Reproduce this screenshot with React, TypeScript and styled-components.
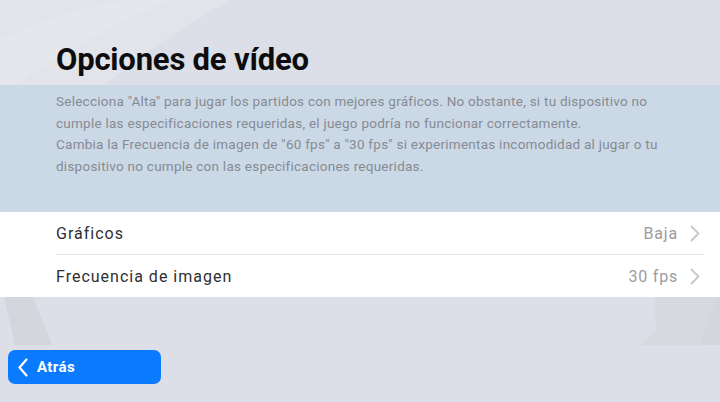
import styled, { createGlobalStyle } from 'styled-components';

const GlobalStyle = createGlobalStyle`
  html, body {
    margin: 0;
    padding: 0;
    background: #dcdfe7;
  }
  #root {
    width: 720px;
    height: 402px;
    overflow: hidden;
  }
`;

const Screen = styled.div`
  position: relative;
  width: 720px;
  height: 402px;
  display: flex;
  flex-direction: column;
  background: #dcdfe7;
  font-family: Roboto, 'Liberation Sans', sans-serif;
  overflow: hidden;
`;

// background art, sits under everything
const Backdrop = styled.svg`
  position: absolute;
  left: 0;
  top: 0;
  z-index: 0;
`;

const Header = styled.header`
  position: relative;
  z-index: 1;
  height: 85px;
  box-sizing: border-box;
  padding: 41px 0 0 56px;
`;

const Title = styled.h1`
  margin: 0;
  font-size: 31px;
  line-height: 38px;
  font-weight: 700;
  letter-spacing: -0.2px;
  color: #0d0d0f;
`;

const InfoBand = styled.section`
  position: relative;
  z-index: 1;
  height: 127px;
  box-sizing: border-box;
  padding: 6px 0 0 56px;
  background: #cbd8e6;
`;

const InfoText = styled.p`
  margin: 0;
  font-size: 13.5px;
  line-height: 21.5px;
  letter-spacing: 0.25px;
  color: #868b93;
  white-space: nowrap;
`;

const List = styled.ul`
  position: relative;
  z-index: 1;
  margin: 0;
  padding: 0 16px 0 56px;
  list-style: none;
  background: #ffffff;
`;

const Row = styled.li<{ $last?: boolean }>`
  display: flex;
  align-items: center;
  height: 42.5px;
  padding-top: 2px;
  border-bottom: ${(p) => (p.$last ? 'none' : '1px solid #e4e4e6')};
  box-sizing: border-box;
`;

const Label = styled.span`
  flex: 1;
  font-size: 16px;
  letter-spacing: 1px;
  color: #2e2f33;
`;

const Value = styled.span`
  font-size: 16px;
  letter-spacing: 0.8px;
  color: #9b9b9e;
  margin-right: 12px;
`;

const Arrow = styled.span`
  display: flex;
  margin-right: 4px;
`;

const Footer = styled.footer`
  position: relative;
  z-index: 1;
  margin-top: auto;
  height: 57px;
  box-sizing: border-box;
  padding: 5px 0 0 8px;
`;

const BackButton = styled.button`
  display: flex;
  align-items: center;
  gap: 9px;
  width: 153px;
  height: 34px;
  box-sizing: border-box;
  padding: 0 0 0 10px;
  border: none;
  border-radius: 7px;
  background: #0a7bff;
  color: #ffffff;
  font-family: Roboto, 'Liberation Sans', sans-serif;
  font-size: 15px;
  font-weight: 700;
  letter-spacing: 0.4px;
  cursor: pointer;
`;

const Chevron = ({ color, w, h, sw, left }: { color: string; w: number; h: number; sw: number; left?: boolean }) => (
  <svg width={w} height={h} viewBox={`0 0 ${w} ${h}`} fill="none">
    <path
      d={left ? `M${w - 1.5} 1.5 L1.5 ${h / 2} L${w - 1.5} ${h - 1.5}` : `M1.5 1.5 L${w - 1.5} ${h / 2} L1.5 ${h - 1.5}`}
      stroke={color}
      strokeWidth={sw}
      strokeLinecap="round"
      strokeLinejoin="round"
    />
  </svg>
);

const rows = [
  { label: 'Gráficos', value: 'Baja' },
  { label: 'Frecuencia de imagen', value: '30 fps' },
];

export default function App() {
  return (
    <Screen>
      <GlobalStyle />
      <Backdrop width="720" height="345" viewBox="0 0 720 345">
        <path d="M0 0 H230 C160 40 110 75 70 120 L0 130 Z" fill="#e3e5eb" opacity="0.8" />
        <path d="M0 40 C40 20 90 5 130 0 H170 C110 25 50 60 0 95 Z" fill="#e8eaef" opacity="0.6" />
        <circle cx="1000" cy="300" r="345" fill="#d7d9e0" />
        <path d="M4 297 C8 315 12 330 15 345 H52 C45 325 38 310 33 297 Z" fill="#d3d6dd" />
        <path d="M640 345 C660 325 680 310 700 297 H712 C690 315 670 330 655 345 Z" fill="#d6d9e0" />
        <path d="M700 345 C705 325 712 310 720 297 V345 Z" fill="#d3d6dd" />
      </Backdrop>

      <Header>
        <Title>Opciones de vídeo</Title>
      </Header>

      <InfoBand>
        <InfoText>
          Selecciona "Alta" para jugar los partidos con mejores gráficos. No obstante, si tu dispositivo no
          <br />
          cumple las especificaciones requeridas, el juego podría no funcionar correctamente.
        </InfoText>
        <InfoText>
          Cambia la Frecuencia de imagen de "60 fps" a "30 fps" si experimentas incomodidad al jugar o tu
          <br />
          dispositivo no cumple con las especificaciones requeridas.
        </InfoText>
      </InfoBand>

      <List>
        {rows.map((r, i) => (
          <Row key={r.label} $last={i === rows.length - 1}>
            <Label>{r.label}</Label>
            <Value>{r.value}</Value>
            <Arrow>
              <Chevron color="#c6c7cb" w={10} h={17} sw={1.8} />
            </Arrow>
          </Row>
        ))}
      </List>

      <Footer>
        <BackButton type="button">
          <Chevron color="#ffffff" w={10} h={19} sw={2.2} left />
          Atrás
        </BackButton>
      </Footer>
    </Screen>
  );
}
